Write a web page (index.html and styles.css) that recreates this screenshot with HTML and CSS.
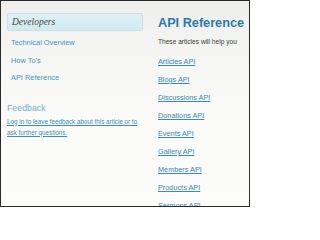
FILE: index.html
```html
<!DOCTYPE html>
<html>
<head>
<meta charset="utf-8">
<link rel="stylesheet" href="styles.css">
</head>
<body>
<div class="frame">
  <aside class="sidebar">
    <div class="section-title">Developers</div>
    <ul class="nav">
      <li><a href="#">Technical Overview</a></li>
      <li><a href="#">How To's</a></li>
      <li><a href="#">API Reference</a></li>
    </ul>
    <h3 class="feedback-title">Feedback</h3>
    <p class="feedback-text"><a href="#">Log in to leave feedback about this article or to ask further questions.</a></p>
  </aside>
  <main class="content">
    <h1 class="page-title">API Reference</h1>
    <p class="intro">These articles will help you</p>
    <ul class="api-list">
      <li><a href="#">Articles API</a></li>
      <li><a href="#">Blogs API</a></li>
      <li><a href="#">Discussions API</a></li>
      <li><a href="#">Donations API</a></li>
      <li><a href="#">Events API</a></li>
      <li><a href="#">Gallery API</a></li>
      <li><a href="#">Members API</a></li>
      <li><a href="#">Products API</a></li>
      <li><a href="#">Sermons API</a></li>
    </ul>
  </main>
</div>
</body>
</html>
```

FILE: styles.css
```css
html, body {
  margin: 0;
  padding: 0;
}
body {
  font-family: "Liberation Sans", Arial, sans-serif;
}
.frame {
  box-sizing: border-box;
  width: 250px;
  height: 207px;
  border: 1px solid #2a2a2a;
  overflow: hidden;
  display: flex;
  background: linear-gradient(to bottom, #eeefed 0px, #f6f7f5 60px, #fbfbfa 130px, #fcfcfb 207px);
}
.sidebar {
  width: 136px;
  flex: none;
  margin-left: 6px;
  padding-top: 12px;
}
.section-title {
  box-sizing: border-box;
  height: 18px;
  border: 1px solid #c7e2ec;
  border-radius: 2px;
  background: linear-gradient(to bottom, #dff1f7, #d2eaf3);
  font-family: "Liberation Serif", Georgia, serif;
  font-style: italic;
  font-size: 9.5px;
  color: #454545;
  line-height: 16px;
  padding-left: 4px;
}
.nav {
  list-style: none;
  margin: 0;
  padding: 0 0 0 4px;
}
.nav li {
  height: 17.5px;
  line-height: 9px;
  padding-top: 4px;
  box-sizing: border-box;
}
.nav a {
  font-size: 7.4px;
  color: #3995c3;
  text-decoration: none;
}
.feedback-title {
  margin: 19px 0 0 0;
  font-size: 8.8px;
  font-weight: normal;
  color: #72afcd;
  line-height: 10px;
}
.feedback-text {
  margin: 3px 0 0 0;
  font-size: 6.3px;
  line-height: 11px;
  width: 138px;
}
.feedback-text a {
  color: #3d8fb9;
  text-decoration: underline;
}
.content {
  margin-left: 15px;
  padding-top: 15px;
  flex: none;
  width: 100px;
  white-space: nowrap;
}
.page-title {
  margin: 0;
  font-size: 12.7px;
  font-weight: bold;
  color: #2b7aab;
  line-height: 15px;
}
.intro {
  margin: 6px 0 0 0;
  font-size: 6.6px;
  color: #3a3a3a;
  line-height: 9px;
}
.api-list {
  list-style: none;
  margin: 0;
  padding: 0;
  padding-top: 4px;
}
.api-list li {
  height: 18px;
  line-height: 18px;
}
.api-list a {
  font-size: 7.3px;
  color: #3a8ab7;
  text-decoration: underline;
}
```
